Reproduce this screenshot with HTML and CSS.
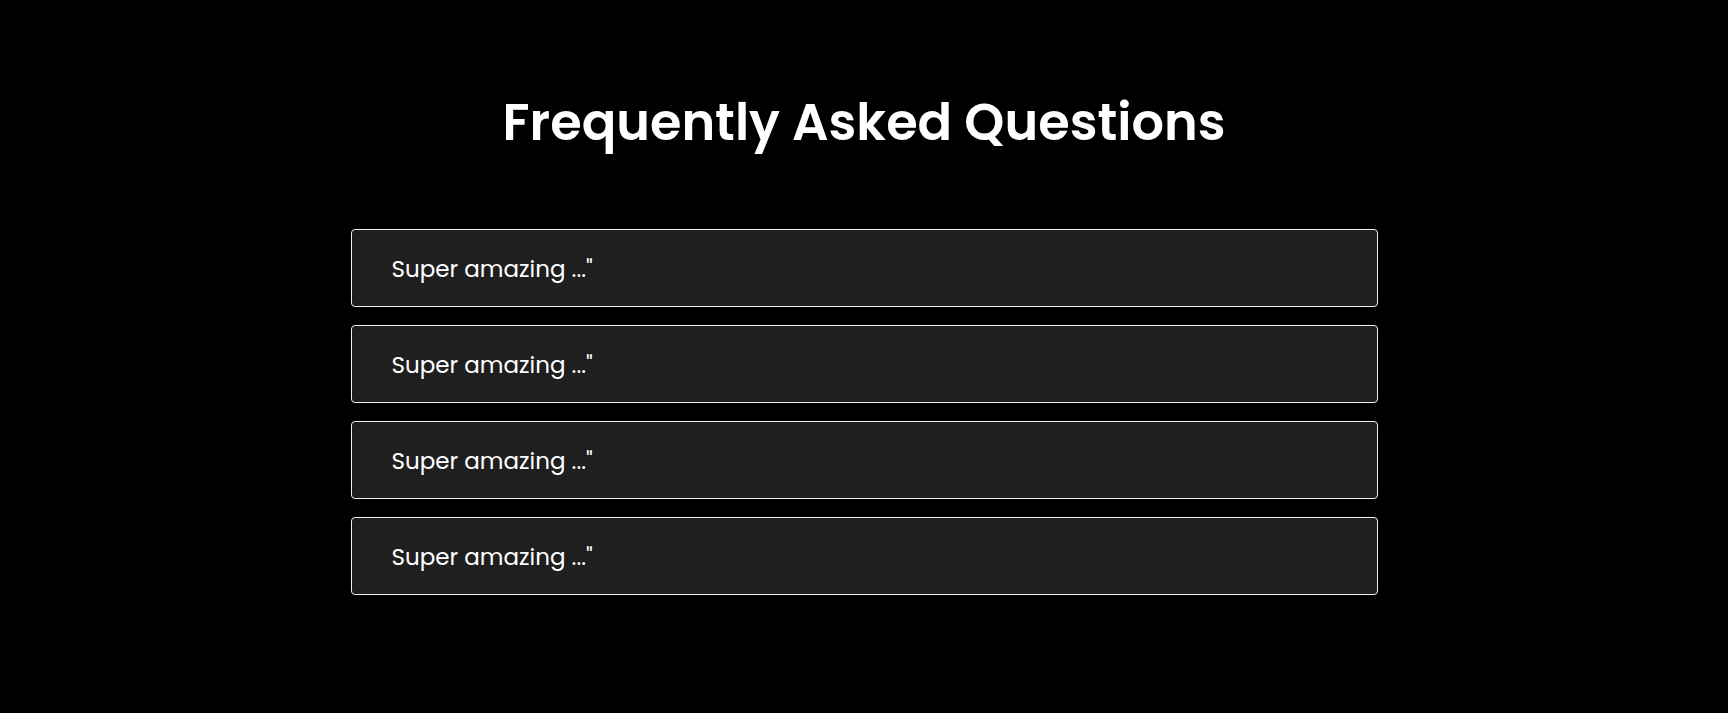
FILE: index.html
```html
<!DOCTYPE html>
<html lang="en">
  <head>
    <meta charset="UTF-8" />
    <meta name="viewport" content="width=device-width, initial-scale=1.0" />
    <title>FAQ</title>
    <link rel="stylesheet" href="styles.css">
  </head>
  <body>
    <section class="faq">
      <h1 class="faq-title">Frequently Asked Questions</h1>

      <div class="faq-list">
        <div class="faq-item">
          <p class="faq-question">Super amazing ..."</p>
        </div>
        <div class="faq-item">
          <p class="faq-question">Super amazing ..."</p>
        </div>
        <div class="faq-item">
          <p class="faq-question">Super amazing ..."</p>
        </div>
        <div class="faq-item">
          <p class="faq-question">Super amazing ..."</p>
        </div>
      </div>
    </section>
  </body>
</html>
```

FILE: styles.css
```css
body {
  font-family: Poppins, "Open Sans", sans-serif;
  margin: 0;
  padding: 0;
  background-color: #000;
  color: #fff;
}

.faq {
  max-width: 1027px;
  margin: 0 auto;
  padding: 82px 0 100px;
}

.faq-title {
  font-size: 51px;
  font-weight: 600;
  text-align: center;
  line-height: 80px;
  margin: 0 0 67px;
}

.faq-list {
  display: flex;
  flex-direction: column;
  gap: 18px;
}

.faq-item {
  height: 78px;
  box-sizing: border-box;
  display: flex;
  align-items: center;
  padding: 2px 40px 0;
  background-color: #1f1f1f;
  border: 1px solid #eee;
  border-radius: 4px;
}

.faq-question {
  margin: 0;
  font-size: 23px;
}
```
